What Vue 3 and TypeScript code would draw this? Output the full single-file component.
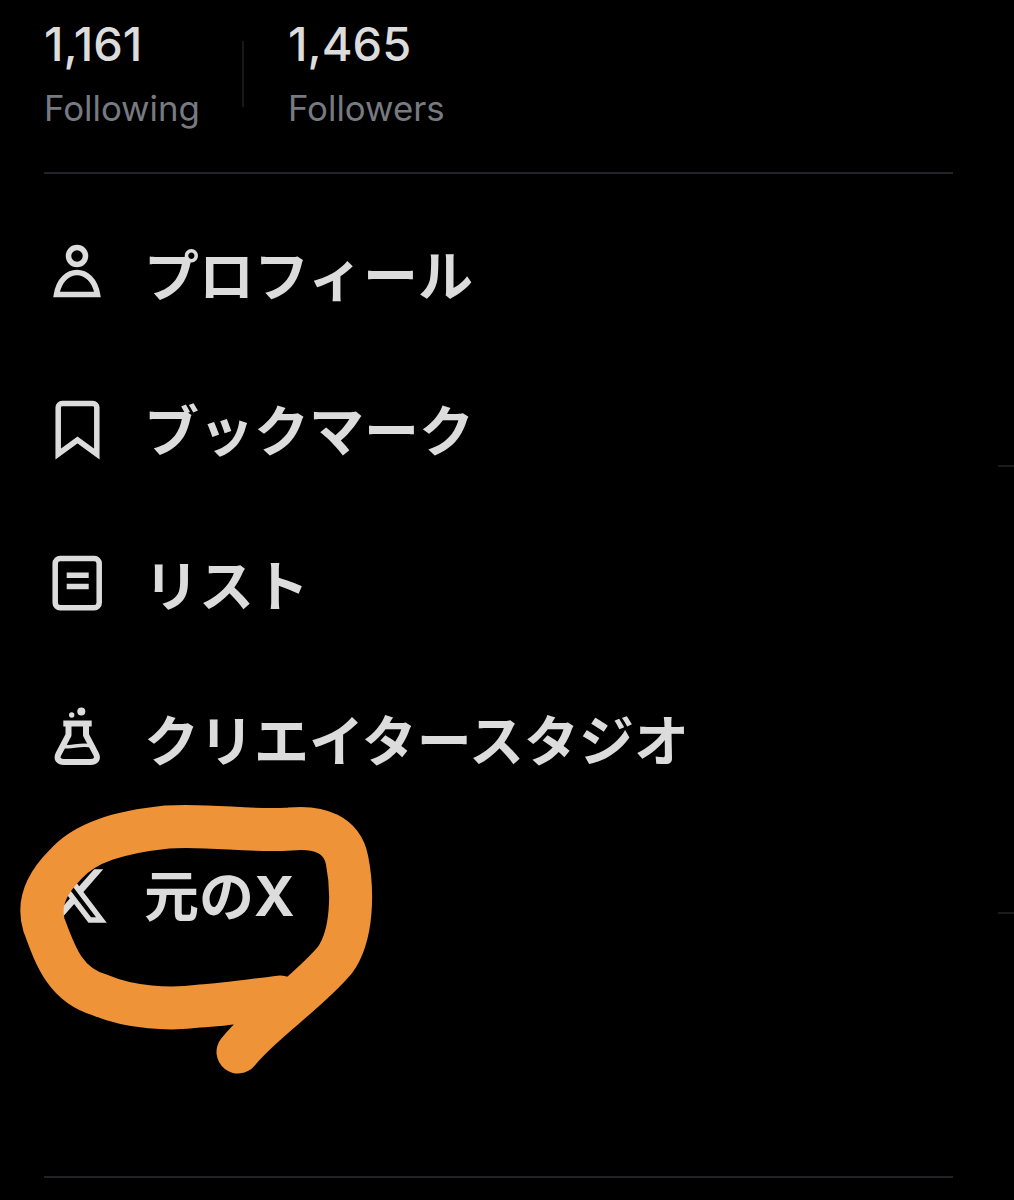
<script setup lang="ts">
const stats = [
  { value: '1,161', label: 'Following' },
  { value: '1,465', label: 'Followers' },
]
</script>

<template>
  <div class="page">
    <section class="stats">
      <div class="stat">
        <div class="value">{{ stats[0].value }}</div>
        <div class="label">{{ stats[0].label }}</div>
      </div>
      <div class="vline"></div>
      <div class="stat">
        <div class="value">{{ stats[1].value }}</div>
        <div class="label">{{ stats[1].label }}</div>
      </div>
    </section>
    <div class="rule"></div>
    <nav class="menu">
      <div class="row">
        <svg class="icon" viewBox="0 0 66 66" fill="none" stroke="currentColor" stroke-width="5.5">
          <circle cx="33" cy="13" r="8.5" />
          <path d="M12.5 51.5H53.5C51 37 42 29.5 33 29.5C24 29.5 15 37 12.5 51.5Z" />
        </svg>
        <span class="text">プロフィール</span>
      </div>
      <div class="row">
        <svg class="icon" viewBox="0 0 66 66" fill="none" stroke="currentColor" stroke-width="5.5">
          <path d="M14.2 56V9.5a4 4 0 0 1 4-4H48.8a4 4 0 0 1 4 4V56L33.5 42Z" />
        </svg>
        <span class="text">ブックマーク</span>
      </div>
      <div class="row">
        <svg class="icon" viewBox="0 0 66 66" fill="none" stroke="currentColor" stroke-width="5.5">
          <rect x="11.2" y="5.5" width="44" height="49.3" rx="5" />
          <path d="M22.7 22.2H44.7M22.7 33.4H44.7" />
        </svg>
        <span class="text">リスト</span>
      </div>
      <div class="row">
        <svg class="icon" viewBox="0 0 66 66" fill="none" stroke="currentColor" stroke-width="6">
          <circle cx="27.7" cy="7" r="2.7" fill="currentColor" stroke="none" />
          <circle cx="37.3" cy="3.5" r="4" fill="currentColor" stroke="none" />
          <path d="M19.3 15.5H47.7" />
          <path d="M24.5 15.5V27L14.5 46C12 51 15 54 20 54H46.5C51.5 54 54.5 51 52 46L42 27V15.5" stroke-linejoin="round" />
          <path d="M19 38C27 41 35 35 48 38" stroke-width="3.5" />
        </svg>
        <span class="text">クリエイタースタジオ</span>
      </div>
      <div class="row">
        <svg class="icon" viewBox="0 0 24 24" fill="currentColor">
          <path d="M18.244 2.25h3.308l-7.227 8.26 8.502 11.24H16.17l-5.214-6.817L4.99 21.75H1.68l7.73-8.835L1.254 2.25H8.08l4.713 6.231zm-1.161 17.52h1.833L7.084 4.126H5.117z" />
        </svg>
        <span class="text">元のX</span>
      </div>
    </nav>
    <div class="rule bottom"></div>

    <span class="tick tick-a"></span>
    <span class="tick tick-b"></span>

    <svg class="scribble" viewBox="0 0 1014 1200" fill="none">
      <path
        d="M238 1052C262 1022 305 995 335 960C353 935 353 890 347 860C342 835 320 826 290 829C250 832 210 824 167 827C120 832 85 842 65 865C45 885 38 905 44 925C55 955 65 985 100 995C130 1008 170 1010 200 1006C225 1005 255 1000 280 997"
        stroke="#ee9338"
        stroke-width="43"
        stroke-linecap="round"
        stroke-linejoin="round"
      />
    </svg>
  </div>
</template>

<style scoped>
.page {
  position: relative;
  width: 1014px;
  height: 1200px;
  overflow: hidden;
  background: #000;
  color: #dcdcdc;
  font-family: "Inter", "Noto Sans CJK JP", sans-serif;
}
.stats {
  display: flex;
  align-items: flex-start;
  padding: 18px 44px 0;
  height: 152px;
  box-sizing: border-box;
}
.stat {
  display: flex;
  flex-direction: column;
  gap: 17px;
}
.value {
  font-size: 47px;
  line-height: 52px;
  font-weight: 500;
}
.label {
  font-size: 34.8px;
  line-height: 42px;
  color: #777a80;
}
.vline {
  width: 2px;
  height: 66px;
  background: #18181a;
  margin: 23px 44px 0 42px;
}
.rule {
  height: 2px;
  margin: 20px 61px 0 44px;
  background: #222326;
}
.menu {
  display: flex;
  flex-direction: column;
  gap: 89px;
  padding: 69px 0 0 44px;
}
.row {
  display: flex;
  align-items: center;
  height: 66px;
  gap: 34px;
}
.icon {
  width: 66px;
  height: 66px;
  flex: none;
  overflow: visible;
}
.text {
  font-family: "Inter", "Noto Sans CJK JP", sans-serif;
  font-size: 55px;
  line-height: 66px;
  font-weight: 700;
  white-space: nowrap;
  padding-bottom: 1px;
}
.rule.bottom {
  margin-top: 247px;
}
.tick {
  position: absolute;
  right: 0;
  width: 16px;
  height: 2px;
  background: #1c1c1e;
}
.tick-a { top: 465px; }
.tick-b { top: 912px; }
.scribble {
  position: absolute;
  inset: 0;
  width: 1014px;
  height: 1200px;
  pointer-events: none;
}
</style>
